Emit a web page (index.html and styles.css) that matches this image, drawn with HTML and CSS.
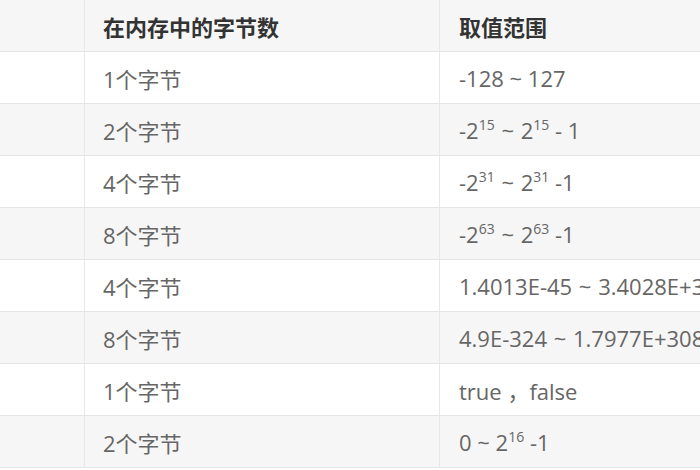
FILE: index.html
```html
<!DOCTYPE html>
<html>
<head>
<meta charset="utf-8">
<link rel="stylesheet" href="styles.css">
</head>
<body>
<div class="wrap">
<table class="tbl">
  <tr class="head"><td class="c1"></td><td class="c2">在内存中的字节数</td><td class="c3">取值范围</td></tr>
  <tr><td class="c1"></td><td class="c2">1个字节</td><td class="c3">-128 ~ 127</td></tr>
  <tr class="alt"><td class="c1"></td><td class="c2">2个字节</td><td class="c3">-2<sup>15</sup> <span class="t">~</span> 2<sup>15</sup> - 1</td></tr>
  <tr><td class="c1"></td><td class="c2">4个字节</td><td class="c3">-2<sup>31</sup> <span class="t">~</span> 2<sup>31</sup> -1</td></tr>
  <tr class="alt"><td class="c1"></td><td class="c2">8个字节</td><td class="c3">-2<sup>63</sup> <span class="t">~</span> 2<sup>63</sup> -1</td></tr>
  <tr><td class="c1"></td><td class="c2">4个字节</td><td class="c3">1.4013E-45 <span class="t">~</span> 3.4028E+38</td></tr>
  <tr class="alt"><td class="c1"></td><td class="c2">8个字节</td><td class="c3">4.9E-324 <span class="t">~</span> 1.7977E+308</td></tr>
  <tr><td class="c1"></td><td class="c2">1个字节</td><td class="c3">true ，false</td></tr>
  <tr class="alt"><td class="c1"></td><td class="c2">2个字节</td><td class="c3">0 ~ 2<sup>16</sup> -1</td></tr>
</table>
</div>
</body>
</html>
```
FILE: styles.css
```css
html, body {
  margin: 0;
  padding: 0;
  background: #ffffff;
  overflow: hidden;
}
.wrap {
  width: 700px;
  height: 470px;
  overflow: hidden;
}
.tbl {
  border-collapse: collapse;
  table-layout: fixed;
  width: 900px;
  font-family: "Open Sans", "Noto Sans CJK SC", sans-serif;
  font-size: 22px;
  color: #666666;
}
.tbl td {
  height: 51px;
  padding: 0;
  border-bottom: 1px solid #e4e4e4;
  border-right: 1px solid #e8e8e8;
  white-space: nowrap;
  vertical-align: middle;
}
.c1 { width: 84px; }
.c2 { width: 336px; padding-left: 18px !important; }
.c3 { width: 440px; padding-left: 19px !important; }
.head td {
  background: #f6f6f6;
  color: #333333;
  font-weight: bold;
  height: 51px;
}
.alt td {
  background: #f6f6f6;
}
.t {
  display: inline-block;
  padding: 0 1px;
}
sup {
  font-size: 14px;
  vertical-align: 9px;
  line-height: 0;
}
```
